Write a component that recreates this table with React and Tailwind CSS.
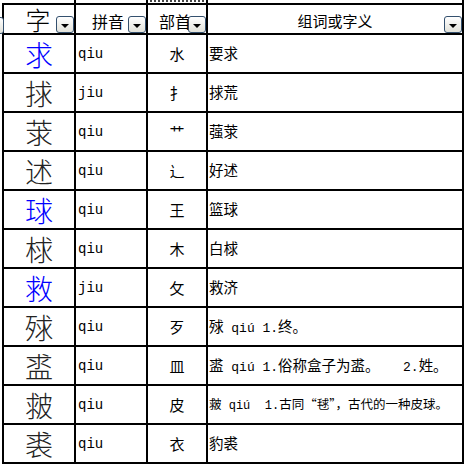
import React from 'react'

const rows = [
   { ch: '求', blue: true, py: 'qiu', bs: '水', mean: '要求' },
   { ch: '捄', py: 'jiu', bs: '扌', mean: '捄荒' },
   { ch: '莍', py: 'qiu', bs: '艹', mean: '蔃莍' },
   { ch: '述', py: 'qiu', bs: '辶', mean: '好述' },
   { ch: '球', blue: true, py: 'qiu', bs: '王', mean: '篮球' },
   { ch: '梂', py: 'qiu', bs: '木', mean: '白梂' },
   { ch: '救', blue: true, py: 'jiu', bs: '攵', mean: '救济' },
   { ch: '殏', py: 'qiu', bs: '歹', mean: '殏 qiú 1.终。' },
   { ch: '盚', py: 'qiu', bs: '皿', mean: '盚 qiú 1.俗称盒子为盚。   2.姓。' },
   { ch: '皳', py: 'qiu', bs: '皮', mean: '皳 qiú  1.古同“毬”，古代的一种皮球。', small: true },
   { ch: '裘', py: 'qiu', bs: '衣', mean: '豹裘' },
]

const cjk = { fontFamily: '"Noto Sans CJK SC", sans-serif' }
const mono = { fontFamily: '"Liberation Mono", "Noto Sans CJK SC", monospace' }

// latin bits in the meaning column are set in a narrow monospace, as in the sheet
const Mixed = ({ text, small }) =>
   text.split(/([ -~\u00C0-\u017F]+)/).map((part, i) =>
      /^[ -~\u00C0-\u017F]+$/.test(part)
         ? <span key={i} style={mono} className={small ? 'text-[12px]' : 'text-[13px]'}>{part}</span>
         : <span key={i}>{part}</span>
   )

const FilterBtn = ({ className = '' }) => (
   <div className={`w-[18px] h-[17px] border border-[#34506e] rounded-[3px] bg-gradient-to-b from-white to-[#e2e2da] flex items-center justify-center ${className}`}>
      <div className="mt-[2px] w-0 h-0 border-x-[4px] border-x-transparent border-t-[4px] border-t-black" />
   </div>
)

const cols = 'grid grid-cols-[72px_72px_60px_256px]'
const cell = 'border-r-2 border-b-2 border-black'

export default function App() {
   return (
      <div className="w-[466px] h-[465px] bg-white overflow-hidden relative" style={cjk}>
         <div className={`${cols} ml-[4px] h-[3px]`}>
            <div className="border-r-2 border-black" />
            <div className="border-r-2 border-black" />
            <div className="border-r-2 border-black flex justify-center">
               <div className="w-[54px] h-[2px] border-b-2 border-dotted border-[#444]" />
            </div>
            <div className="border-r-2 border-black" />
         </div>

         <div className="relative ml-[2px] w-[462px] border-l-2 border-t-2 border-black">
            <FilterBtn className="absolute -left-[18px] top-[12px]" />

            <div className={`${cols} h-[30px]`}>
               <div className={`${cell} relative flex items-center justify-center`}>
                  <span className="text-[25px] leading-none text-black font-light pt-[1px] pr-[2px]">字</span>
                  <FilterBtn className="absolute right-0 bottom-0" />
               </div>
               <div className={`${cell} relative flex items-center justify-center`}>
                  <span className="text-[16px] leading-none text-black pt-[3px] pr-[6px]">拼音</span>
                  <FilterBtn className="absolute right-0 bottom-0" />
               </div>
               <div className={`${cell} relative flex items-center justify-center`}>
                  <span className="text-[16px] leading-none text-black pt-[3px] pr-[4px]">部首</span>
                  <FilterBtn className="absolute right-0 bottom-0" />
               </div>
               <div className={`${cell} relative flex items-center justify-center`}>
                  <span className="text-[15px] leading-none text-black pt-[2px]">组词或字义</span>
                  <FilterBtn className="absolute right-0 bottom-0" />
               </div>
            </div>

            {rows.map((r, i) => (
               <div key={i} className={`${cols} h-[39px]`}>
                  <div className={`${cell} flex items-center justify-center`}>
                     <span className={`text-[28px] leading-none font-light ${r.blue ? 'text-[#0000ff]' : 'text-[#222]'}`}>{r.ch}</span>
                  </div>
                  <div className={`${cell} flex items-center pl-[2px]`}>
                     <span className="text-[14px] leading-none text-black" style={mono}>{r.py}</span>
                  </div>
                  <div className={`${cell} flex items-center justify-center`}>
                     <span className="text-[15px] leading-none text-black">{r.bs}</span>
                  </div>
                  <div className={`${cell} flex items-center pl-[1px]`}>
                     <span className={`${r.small ? 'text-[12.5px]' : 'text-[14.5px]'} leading-none text-black whitespace-pre`}>
                        <Mixed text={r.mean} small={r.small} />
                     </span>
                  </div>
               </div>
            ))}
         </div>
      </div>
   )
}
